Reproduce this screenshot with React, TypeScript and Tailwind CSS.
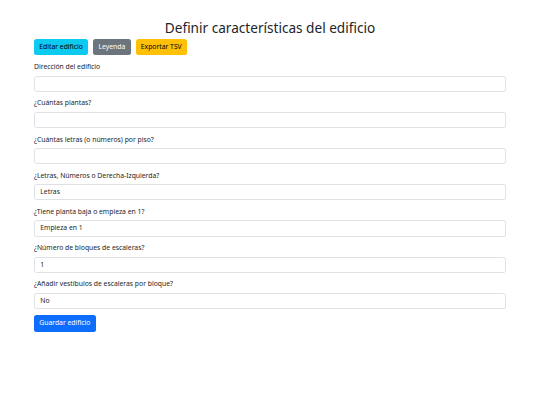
import React from "react";

const fields: { label: string; value: string }[] = [
  { label: "Dirección del edificio", value: "" },
  { label: "¿Cuántas plantas?", value: "" },
  { label: "¿Cuántas letras (o números) por piso?", value: "" },
  { label: "¿Letras, Números o Derecha-Izquierda?", value: "Letras" },
  { label: "¿Tiene planta baja o empieza en 1?", value: "Empieza en 1" },
  { label: "¿Número de bloques de escaleras?", value: "1" },
  { label: "¿Añadir vestíbulos de escaleras por bloque?", value: "No" },
];

export default function App() {
  return (
    <div
      className="w-full min-h-[405px] bg-white text-[#212529]"
      style={{ fontFamily: '"Noto Sans", "Open Sans", sans-serif' }}
    >
      <div className="w-[472px] mx-auto">
        <h1 className="pt-[19px] mb-[3px] text-center text-[13.6px] leading-[17px] font-normal">
          Definir características del edificio
        </h1>
        <div className="flex gap-[5px] mb-[6.9px]">
          <button className="h-[16.4px] px-[5.3px] rounded-[2.5px] bg-[#0dcaf0] text-black text-[6.8px] leading-none">
            Editar edificio
          </button>
          <button className="h-[16.4px] px-[5.3px] rounded-[2.5px] bg-[#6c757d] text-white text-[6.8px] leading-none">
            Leyenda
          </button>
          <button className="h-[16.4px] px-[5.3px] rounded-[2.5px] bg-[#ffc107] text-black text-[6.8px] leading-none">
            Exportar TSV
          </button>
        </div>
        {fields.map((f) => (
          <div key={f.label} className="mb-[6.6px]">
            <div className="text-[6.8px] leading-[10px] mb-[3.4px]">{f.label}</div>
            <div className="h-[16.2px] border border-[#dee2e6] rounded-[2.5px] px-[5.3px] flex items-center text-[6.8px]">
              {f.value}
            </div>
          </div>
        ))}
        <div className="flex">
          <button className="h-[16.4px] px-[5.3px] rounded-[2.5px] bg-[#0d6efd] text-white text-[6.8px] leading-none">
            Guardar edificio
          </button>
        </div>
      </div>
    </div>
  );
}
